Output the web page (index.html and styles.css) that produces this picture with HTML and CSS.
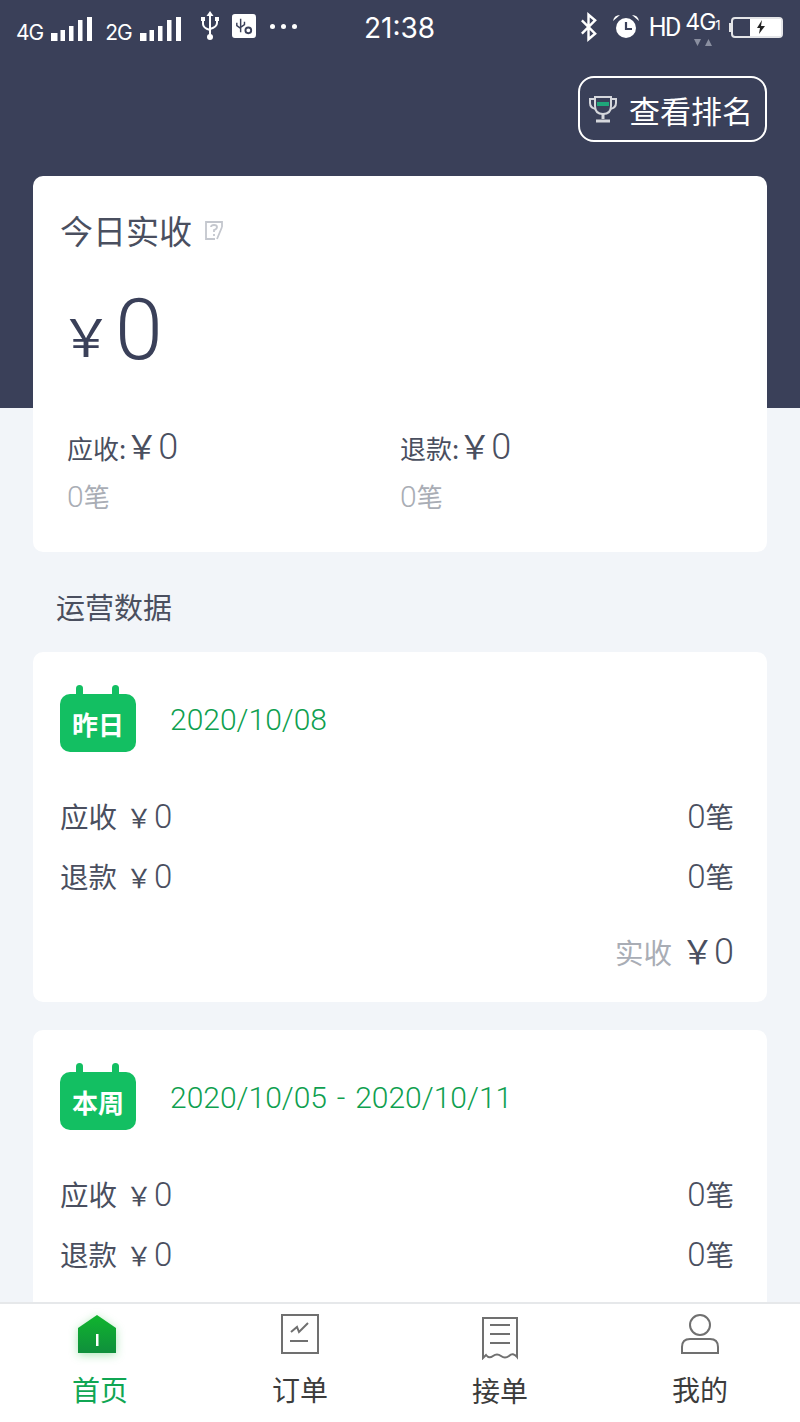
FILE: index.html
```html
<!DOCTYPE html>
<html lang="zh-CN">
<head>
  <meta charset="UTF-8">
  <meta name="viewport" content="width=device-width, initial-scale=1.0">
  <title>首页</title>
  <link rel="stylesheet" href="styles.css">
</head>
<body>
  <div class="page">

    <!-- Phone status bar -->
    <div class="status-bar">
      <div class="status-left">
        <span class="net">4G</span>
        <svg class="signal" width="41" height="24" viewBox="0 0 41 24"><path d="M0 16h6.500v8H0zM9.500 13H14v11H9.500zM18 9h4.500v15H18zM27 3h4.500v21H27zM36 0h5v24h-5z" fill="#fff"/></svg>
        <span class="net net-second">2G</span>
        <svg class="signal" width="41" height="24" viewBox="0 0 41 24"><path d="M0 16h6.500v8H0zM9.500 13H14v11H9.500zM18 9h4.500v15H18zM27 3h4.500v21H27zM36 0h5v24h-5z" fill="#fff"/></svg>
        <svg class="usb" width="20" height="30" viewBox="0 0 20 30" fill="none" stroke="#fff" stroke-width="2"><path d="M10 3v23M3 9v4q0 4 7 6M17 9v3q0 4-7 6"/><path d="M10 0l3.500 5h-7z" fill="#fff" stroke="none"/><circle cx="10" cy="26" r="3" fill="#fff" stroke="none"/><path d="M1 6h4v4H1zM15 6h4v4h-4z" fill="#fff" stroke="none"/></svg>
        <svg class="usb-debug" width="24" height="24" viewBox="0 0 25 25"><rect width="25" height="25" rx="3" fill="#fff"/><path d="M9 5v14M5 9v3l4 3M13 8v3l-4 3" fill="none" stroke="#3a4059" stroke-width="1.500"/><circle cx="17" cy="17" r="3" fill="none" stroke="#3a4059" stroke-width="2"/></svg>
        <div class="dots"><i></i><i></i><i></i></div>
      </div>
      <div class="status-time">21:38</div>
      <div class="status-right">
        <svg class="bt" width="17" height="30" viewBox="0 0 18 30" fill="none" stroke="#fff" stroke-width="2.600"><path d="M2 8l14 14-7 6V2l7 6L2 22"/></svg>
        <svg class="alarm" width="26" height="25" viewBox="0 0 26 25"><circle cx="13" cy="14" r="10" fill="#fff"/><path d="M13 8v7h6" fill="none" stroke="#3a4059" stroke-width="2.200"/><path d="M0 7q1-6 7-6zM26 7q-1-6-7-6z" fill="#fff"/></svg>
        <span class="hd">HD</span>
        <div class="net-4g">
          <span>4G<small>1</small></span>
          <svg width="20" height="8" viewBox="0 0 20 8"><path d="M1 0h7L4.500 7zM12 7h7l-3.500-7z" fill="#8a8fa0"/></svg>
        </div>
        <div class="battery"><div class="battery-fill"><svg width="10" height="14" viewBox="0 0 10 14"><path d="M6 0L1 8h3l-1 6 6-8H5z" fill="#222"/></svg></div></div>
      </div>
    </div>

    <div class="rank-row">
      <div class="rank-btn">
        <svg width="30" height="30" viewBox="0 0 30 30" fill="none" stroke="#d5d7dc" stroke-width="2"><path d="M7 3h16v9q0 8-8 8t-8-8z"/><path d="M7 5H2v4q0 5 6 6M23 5h5v4q0 5-6 6"/><path d="M15 20v5M8 27h14" stroke-width="3"/><rect x="9" y="8" width="12" height="4" fill="#1fa67a" stroke="none"/></svg>
        <span>查看排名</span>
      </div>
    </div>

    <!-- Today summary -->
    <div class="card today">
      <div class="today-title">今日实收
        <svg width="20" height="21" viewBox="0 0 20 21" fill="none" stroke="#c4c7ce" stroke-width="1.800"><path d="M18 7V2H2v17h9M18 7l-5 12"/><path d="M7 7q0-2 3-2t3 2-3 3v2M10 14v2"/></svg>
      </div>
      <div class="today-total"><span class="yen">￥</span><span class="big-zero">0</span></div>
      <div class="today-cols">
        <div class="today-col">
          <div class="today-money">应收:<span class="money-yen">￥</span><span class="digit">0</span></div>
          <div class="today-count"><span class="digit">0</span>笔</div>
        </div>
        <div class="today-col">
          <div class="today-money">退款:<span class="money-yen">￥</span><span class="digit">0</span></div>
          <div class="today-count"><span class="digit">0</span>笔</div>
        </div>
      </div>
    </div>

    <div class="section-title">运营数据</div>

    <div class="card data-card">
      <div class="data-head">
        <div class="cal"><span>昨日</span></div>
        <div class="data-date">2020/10/08</div>
      </div>
      <div class="data-row"><div>应收<span class="num">￥<span class="digit">0</span></span></div><div><span class="digit">0</span>笔</div></div>
      <div class="data-row"><div>退款<span class="num">￥<span class="digit">0</span></span></div><div><span class="digit">0</span>笔</div></div>
      <div class="data-total"><span class="label">实收</span><span class="num">￥<span class="digit">0</span></span></div>
    </div>

    <div class="card data-card">
      <div class="data-head">
        <div class="cal"><span>本周</span></div>
        <div class="data-date">2020/10/05 - 2020/10/11</div>
      </div>
      <div class="data-row"><div>应收<span class="num">￥<span class="digit">0</span></span></div><div><span class="digit">0</span>笔</div></div>
      <div class="data-row"><div>退款<span class="num">￥<span class="digit">0</span></span></div><div><span class="digit">0</span>笔</div></div>
    </div>

    <!-- Bottom tabs -->
    <div class="tabbar">
      <div class="tab active">
        <svg width="40" height="40" viewBox="0 0 40 40"><defs><linearGradient id="homeFill" x1="0" y1="0" x2="0" y2="1"><stop offset="0" stop-color="#10b52e"/><stop offset="1" stop-color="#0f8f3c"/></linearGradient></defs><path d="M20 1L39 14V39H1V14z" fill="url(#homeFill)"/><rect x="19" y="20" width="2.500" height="12" fill="#fff"/></svg>
        <span>首页</span>
      </div>
      <div class="tab">
        <svg width="40" height="42" viewBox="0 0 40 42" fill="none" stroke="#707070" stroke-width="2"><rect x="2" y="2" width="36" height="38"/><path d="M11 19l6-5 2 5 9-9M10 28h18"/></svg>
        <span>订单</span>
      </div>
      <div class="tab tab-receipt">
        <svg width="40" height="44" viewBox="0 0 40 44" fill="none" stroke="#707070" stroke-width="2"><path d="M3 2h34v39q-4-5-8-1-4 3-8 0-4-3-8 0-4 3-7-1-2 2-3 3z"/><path d="M10 9h20M10 18h20M10 27h20"/></svg>
        <span>接单</span>
      </div>
      <div class="tab">
        <svg width="40" height="42" viewBox="0 0 40 42" fill="none" stroke="#707070" stroke-width="2"><circle cx="20" cy="12" r="10"/><path d="M10 26h20q8 0 8 8v6H2v-6q0-8 8-8z"/></svg>
        <span>我的</span>
      </div>
    </div>

  </div>
</body>
</html>
```

FILE: styles.css
```css
body {
  margin: 0;
  padding: 0;
  font-family: "Noto Sans CJK SC", "Noto Sans", sans-serif;
  color: #3a4059;
}

.page {
  position: relative;
  width: 800px;
  height: 1422px;
  overflow: hidden;
  background: linear-gradient(#3a4059 408px, #f2f5f9 408px);
}

/* Status bar */
.status-bar {
  height: 60px;
  display: flex;
  align-items: center;
  padding: 0 17px 0 16px;
  color: #fff;
  font-family: Inter, Roboto, sans-serif;
}

.status-left {
  width: 348px;
  flex: none;
  display: flex;
  align-items: center;
}

.net {
  font-size: 21px;
  letter-spacing: -1px;
  margin-top: 5px;
  margin-right: 8px;
}

.net-second {
  margin-left: 13px;
}

.signal {
  margin-top: -2px;
}

.usb {
  margin-left: 19px;
  margin-top: -8px;
}

.usb-debug {
  margin-left: 12px;
  margin-top: -8px;
}

.dots {
  display: flex;
  gap: 6px;
  margin-left: 14px;
  margin-top: -8px;
}

.dots i {
  width: 5px;
  height: 5px;
  border-radius: 50%;
  background: #fff;
}

.status-time {
  width: 72px;
  flex: none;
  font-size: 28px;
  margin-top: -4px;
}

.status-right {
  flex: 1;
  display: flex;
  align-items: center;
  justify-content: flex-end;
}

.bt {
  margin-top: -6px;
}

.alarm {
  margin-left: 16px;
  margin-top: -7px;
}

.hd {
  font-family: Roboto, sans-serif;
  font-size: 25px;
  letter-spacing: -1.500px;
  margin-left: 10px;
  margin-top: -6px;
}

.net-4g {
  width: 35px;
  display: flex;
  flex-direction: column;
  align-items: center;
  margin-left: 5px;
  margin-top: -4px;
  font-size: 23px;
  line-height: 24px;
  letter-spacing: -1px;
  white-space: nowrap;
}

.net-4g small {
  font-size: 13px;
}

.net-4g svg {
  display: block;
  margin-top: 2px;
}

.battery {
  position: relative;
  flex: none;
  width: 52px;
  height: 21px;
  box-sizing: border-box;
  margin-left: 11px;
  margin-top: -6px;
  border: 2px solid #e4e5e8;
  border-radius: 4px;
  display: flex;
  justify-content: flex-end;
}

/* battery nub */
.battery::before {
  content: "";
  position: absolute;
  left: -4px;
  top: 4px;
  width: 2px;
  height: 9px;
  background: #e4e5e8;
}

.battery-fill {
  width: 31px;
  background: #fff;
  display: flex;
  align-items: center;
  justify-content: center;
  padding-right: 10px;
  box-sizing: border-box;
}

/* Rank button */
.rank-row {
  display: flex;
  justify-content: flex-end;
  padding: 16px 33px 34px 0;
}

.rank-btn {
  width: 189px;
  height: 66px;
  box-sizing: border-box;
  border: 2px solid #fff;
  border-radius: 16px;
  display: flex;
  align-items: center;
  gap: 11px;
  padding-left: 8px;
  color: #fff;
  font-size: 31px;
}

/* Cards */
.card {
  margin: 0 33px;
  background: #fff;
  border-radius: 10px;
}

.today {
  height: 376px;
  box-sizing: border-box;
  padding: 30px 27px 0;
}

.today-title {
  display: flex;
  align-items: center;
  gap: 12px;
  font-size: 33px;
  line-height: 48px;
  color: #4a4f5f;
}

.today-total {
  display: flex;
  align-items: center;
  height: 100px;
  margin-top: 25px;
}

.yen {
  font-size: 52px;
  margin-right: 3px;
  margin-top: 10px;
}

.big-zero {
  font-family: Roboto, sans-serif;
  font-weight: 300;
  font-size: 86px;
}

.digit {
  font-family: Roboto, sans-serif;
  font-weight: 300;
  line-height: 1;
}

.today-cols {
  display: flex;
  margin-top: 46px;
  padding-left: 7px;
}

.today-col {
  width: 333px;
}

.today-money {
  font-size: 26px;
  line-height: 40px;
  color: #4a4f5f;
}

.money-yen {
  margin-left: -1px;
  font-size: 33px;
}

.today-money .digit {
  font-size: 36px;
}

.today-count {
  margin-top: 8px;
  font-size: 26px;
  line-height: 40px;
  color: #a9adb5;
}

.today-count .digit {
  font-size: 30px;
}

.section-title {
  margin: 34px 0 26px 56px;
  font-size: 29px;
  line-height: 40px;
  color: #4a4f5f;
}

.data-card {
  height: 350px;
  box-sizing: border-box;
  margin-bottom: 28px;
  padding: 32px 33px 0 27px;
}

.data-head {
  display: flex;
  align-items: flex-end;
  height: 68px;
}

.cal {
  position: relative;
  width: 76px;
  height: 58px;
  border-radius: 10px;
  background: #13bf62;
  display: flex;
  align-items: center;
  justify-content: center;
  color: #fff;
  font-size: 26px;
  font-weight: 700;
}

/* the two binder tabs on top of the calendar */
.cal::before,
.cal::after {
  content: "";
  position: absolute;
  top: -9px;
  width: 7px;
  height: 12px;
  border-radius: 4px 4px 0 0;
  background: #13bf62;
}

.cal::before {
  left: 16px;
}

.cal::after {
  right: 17px;
}

.data-date {
  margin-left: 34px;
  margin-bottom: 12px;
  font-family: Roboto, sans-serif;
  font-weight: 300;
  font-size: 30px;
  line-height: 40px;
  word-spacing: 2.500px;
  color: #0f9f50;
}

.data-row {
  display: flex;
  justify-content: space-between;
  font-size: 28.500px;
  line-height: 40px;
  margin-top: 19px;
  color: #4a4f5f;
}

.data-head + .data-row {
  margin-top: 44px;
}

.data-row .digit {
  font-size: 33px;
}

.num {
  margin-left: 9px;
  font-size: 26px;
}

.num .digit {
  margin-left: 2px;
}

.data-total {
  display: flex;
  justify-content: flex-end;
  align-items: baseline;
  margin-top: 33px;
  font-size: 28.500px;
  line-height: 40px;
  color: #4a4f5f;
}

.data-total .label {
  color: #a9adb5;
}

.data-total .num {
  margin-left: 9px;
  font-size: 33px;
}

.data-total .digit {
  margin-left: 0;
  font-size: 36px;
}

.tabbar {
  position: absolute;
  left: 0;
  right: 0;
  bottom: 0;
  height: 120px;
  box-sizing: border-box;
  display: flex;
  background: #fff;
  border-top: 2px solid #e6e8ea;
}

.tab {
  flex: 1;
  display: flex;
  flex-direction: column;
  align-items: center;
  padding-top: 9px;
  font-size: 28px;
  line-height: 40px;
  color: #3c3c3c;
}

.tab span {
  margin-top: 14px;
}

.tab.active {
  color: #10a653;
}

.tab.active svg {
  margin-top: 1px;
  margin-right: 6px;
  filter: drop-shadow(0 2px 5px rgba(16, 181, 46, 0.35));
}

.tab.active span {
  margin-top: 15px;
}

.tab-receipt svg {
  margin-top: 3px;
}

.tab-receipt span {
  margin-top: 10px;
}
```
